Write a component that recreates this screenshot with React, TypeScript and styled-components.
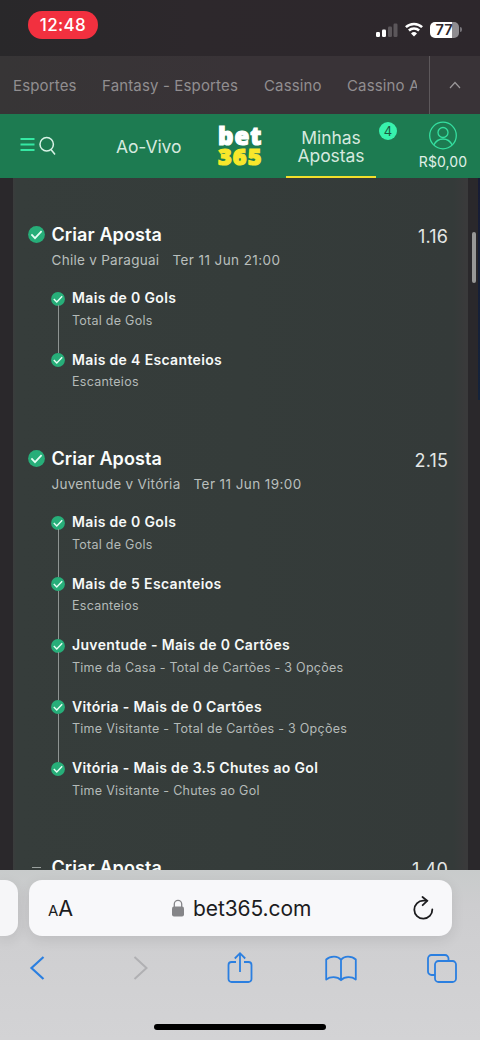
import React from "react";
import styled, { createGlobalStyle } from "styled-components";

const Global = createGlobalStyle`
  * { box-sizing: border-box; }
  body { margin: 0; background: #29272a; font-family: Inter, "Liberation Sans", sans-serif; }
`;

const Screen = styled.div`
  width: 480px;
  height: 1040px;
  display: flex;
  flex-direction: column;
  overflow: hidden;
`;

const StatusBar = styled.header`
  height: 56px;
  flex: none;
  display: flex;
  align-items: flex-start;
  justify-content: space-between;
  padding: 11px 18px 0 28px;
  background: linear-gradient(90deg, #29282a 0%, #2d282c 40%, #2d272c 100%);
`;

const Clock = styled.div`
  width: 70px;
  height: 28px;
  border-radius: 14px;
  background: #f2303f;
  color: #fff;
  font-size: 17px;
  font-weight: 500;
  line-height: 28px;
  text-align: center;
  letter-spacing: 0.35px;
`;

const StatusIcons = styled.div`
  display: flex;
  align-items: center;
  gap: 7px;
  padding-top: 10px;
  height: 27px;
`;

const Battery = styled.div`
  position: relative;
  width: 29px;
  height: 16px;
  border-radius: 5px;
  background: linear-gradient(90deg, #fff 76%, #8f8c90 76%);
  color: #2d272c;
  font-size: 14.5px;
  font-weight: 600;
  line-height: 16px;
  text-align: center;
  padding-right: 1px;
  margin-right: 3px;
  &::after {
    content: "";
    position: absolute;
    right: -3px;
    top: 5px;
    width: 2px;
    height: 5px;
    border-radius: 0 2px 2px 0;
    background: #77747a;
  }
`;

const ProductNav = styled.nav`
  height: 58px;
  flex: none;
  display: flex;
  background: linear-gradient(90deg, #373536 0%, #393337 50%, #393337 100%);
  color: #918e90;
`;

const ProductList = styled.div`
  flex: 1;
  min-width: 0;
  display: flex;
  align-items: center;
  gap: 26px;
  padding: 2px 0 0 13px;
  margin-right: 12px;
  overflow: hidden;
  white-space: nowrap;
`;

const Product = styled.span<{ $w: number }>`
  flex: none;
  width: ${(p) => p.$w}px;
  font-size: 15px;
  letter-spacing: 0.15px;
  line-height: 20px;
`;

const Collapse = styled.div`
  width: 51px;
  border-left: 1px solid #5d585b;
  display: flex;
  align-items: center;
  justify-content: center;
`;

const MainNav = styled.nav`
  height: 64px;
  flex: none;
  display: flex;
  background: #1d7b51;
  color: #d6e9df;
`;

const MenuTools = styled.div`
  width: 116px;
  display: flex;
  padding: 22px 0 0 20px;
`;

const NavItem = styled.div`
  width: 101px;
  font-size: 17.5px;
  line-height: 65px;
  letter-spacing: -0.1px;
`;

const Logo = styled.div`
  width: 69px;
  padding: 12px 0 0 1px;
  font-family: "Open Sans", "Noto Sans", sans-serif;
  font-weight: 800;
`;

const LogoLine = styled.div<{ $accent?: boolean }>`
  height: 20px;
  line-height: 20px;
  font-size: ${(p) => (p.$accent ? 23.5 : 24)}px;
  letter-spacing: ${(p) => (p.$accent ? 1.1 : 1)}px;
  color: ${(p) => (p.$accent ? "#f8e72b" : "#fff")};
  -webkit-text-stroke: 1.2px currentColor;
`;

const ActiveTab = styled.div`
  position: relative;
  width: 90px;
  padding-top: 15px;
  border-bottom: 2.5px solid #f1df2b;
  text-align: center;
  font-size: 17.5px;
  line-height: 18px;
  letter-spacing: -0.05px;
`;

const Badge = styled.span`
  position: absolute;
  left: 93px;
  top: 8px;
  width: 18px;
  height: 18px;
  border-radius: 50%;
  background: #38f3ad;
  color: #1c5940;
  font-size: 13px;
  line-height: 18px;
`;

const Account = styled.div`
  flex: 1;
  display: flex;
  flex-direction: column;
  align-items: center;
  padding: 7px 0 0 30px;
  font-size: 14px;
  line-height: 17px;
  letter-spacing: 0.1px;
  gap: 3px;
  color: #e0f0e8;
`;

const Page = styled.main`
  position: relative;
  flex: 1;
  min-height: 0;
  overflow: hidden;
  padding: 0 12px 0 13px;
  background: #2a282b;
`;

const ScrollThumb = styled.div`
  position: absolute;
  right: 4px;
  top: 54px;
  width: 4px;
  height: 51px;
  border-radius: 2px;
  background: #989897;
`;

const EdgeGlow = styled.div`
  position: absolute;
  right: 0;
  top: 0;
  width: 2px;
  height: 222px;
  background: linear-gradient(#171c35, #14233b);
`;

const Slip = styled.section`
  height: 100%;
  padding-top: 44px;
  background: linear-gradient(90deg, #3a3c3c 0, #363d3b 3px, #353c3a 50%, #343a39 440px, #3a3a3b 453px);
`;

const Bet = styled.article`
  display: grid;
  grid-template-columns: 24px 1fr auto;
  padding: 0 20px 0 15px;
`;

const BetTitle = styled.h2`
  margin: 0 0 0 -0.5px;
  font-size: 18px;
  font-weight: 600;
  line-height: 26px;
  letter-spacing: 0.1px;
  color: #fbfdfc;
`;

const BetStatus = styled.div`
  padding-top: 4px;
  height: 26px;
`;

const Odds = styled.div`
  padding-top: 2px;
  height: 26px;
  font-size: 18px;
  line-height: 26px;
  letter-spacing: 0.15px;
  color: #e4e7e6;
`;

const Fixture = styled.div`
  grid-column: 2 / 4;
  display: flex;
  gap: 13px;
  height: 23px;
  line-height: 25px;
  margin-left: -0.5px;
  font-size: 13.5px;
  letter-spacing: 0.28px;
  color: #b9bfbd;
`;

const Kickoff = styled.span`
  letter-spacing: 0.42px;
`;

const Legs = styled.ul`
  grid-column: 2 / 4;
  list-style: none;
  margin: 16px 0 36px;
  padding: 0;
`;

const Leg = styled.li`
  position: relative;
  display: grid;
  grid-template-columns: 21px 1fr;
  margin-left: -1px;
  height: 61.5px;
  &:not(:last-child)::before {
    content: "";
    position: absolute;
    left: 6.5px;
    top: 18px;
    width: 1px;
    height: 48px;
    background: #8e9492;
  }
`;

const LegMark = styled.div`
  padding-top: 4.5px;
  line-height: 0;
`;

const LegName = styled.div`
  font-size: 14px;
  font-weight: 600;
  line-height: 22.6px;
  letter-spacing: 0.34px;
  color: #f6f9f8;
  white-space: nowrap;
`;

const LegMarket = styled.div`
  font-size: 12.5px;
  line-height: 21px;
  letter-spacing: 0.26px;
  color: #b4bab8;
  white-space: nowrap;
`;

const Browser = styled.footer`
  height: 170px;
  flex: none;
  display: flex;
  flex-direction: column;
  background: linear-gradient(#c8cbcb 0, #cdcdcf 35px, #cfcfd1 70px, #d3d3d5 100%);
`;

const AddressRow = styled.div`
  display: flex;
  gap: 11px;
  padding-top: 10px;
  height: 66px;
`;

const NextTab = styled.div`
  width: 18px;
  height: 56px;
  border-radius: 0 13px 13px 0;
  background: #f6f6f8;
  box-shadow: 0 4px 14px rgba(0, 0, 0, 0.09);
`;

const Address = styled.div`
  width: 423px;
  height: 56px;
  display: flex;
  align-items: center;
  border-radius: 13px;
  background: #f8f8fa;
  box-shadow: 0 4px 14px rgba(0, 0, 0, 0.09);
  color: #1c1c1e;
  padding: 0 18px 0 19px;
`;

const TextSize = styled.div`
  width: 123px;
  font-size: 21.5px;
  line-height: 56px;
  padding-top: 2px;
  small { font-size: 15px; }
`;

const Url = styled.div`
  flex: 1;
  padding: 2px 0 0 8px;
  font-size: 21px;
  line-height: 56px;
  letter-spacing: -0.1px;
`;

const Toolbar = styled.div`
  display: grid;
  grid-template-columns: repeat(5, 40px);
  column-gap: 61px;
  justify-items: center;
  align-items: center;
  height: 64px;
  padding-left: 18px;
`;

const HomeIndicator = styled.div`
  width: 172px;
  height: 6px;
  margin: 24px 0 0 154px;
  border-radius: 3px;
  background: #000;
`;

const Check = ({ size }: { size: number }) => (
  <svg width={size} height={size} viewBox="0 0 17 17">
    <circle cx="8.5" cy="8.5" r="8.4" fill="#27ae79" />
    <path d="M3.4 8.4 7 12.2l6.600-7" fill="none" stroke="#e6fff5" strokeWidth="1.7" />
  </svg>
);

type LegData = [name: string, market: string];
type BetData = { won: boolean; fixture: string; time: string; odds: string; legs: LegData[] };

const bets: BetData[] = [
  {
    won: true,
    fixture: "Chile v Paraguai",
    time: "Ter 11 Jun 21:00",
    odds: "1.16",
    legs: [
      ["Mais de 0 Gols", "Total de Gols"],
      ["Mais de 4 Escanteios", "Escanteios"],
    ],
  },
  {
    won: true,
    fixture: "Juventude v Vitória",
    time: "Ter 11 Jun 19:00",
    odds: "2.15",
    legs: [
      ["Mais de 0 Gols", "Total de Gols"],
      ["Mais de 5 Escanteios", "Escanteios"],
      ["Juventude - Mais de 0 Cartões", "Time da Casa - Total de Cartões - 3 Opções"],
      ["Vitória - Mais de 0 Cartões", "Time Visitante - Total de Cartões - 3 Opções"],
      ["Vitória - Mais de 3.5 Chutes ao Gol", "Time Visitante - Chutes ao Gol"],
    ],
  },
  { won: false, fixture: "", time: "", odds: "1.40", legs: [] },
];

export default function App() {
  return (
    <Screen>
      <Global />
      <StatusBar>
        <Clock>12:48</Clock>
        <StatusIcons>
          <svg width="23" height="16" viewBox="0 0 23 16">
            <rect x="1" y="10" width="4" height="5" rx="1.2" fill="#fff" />
            <rect x="7" y="7.5" width="4" height="7.5" rx="1.2" fill="#fff" />
            <rect x="13" y="4.5" width="4" height="10.5" rx="1.2" fill="#5b565a" />
            <rect x="18.500" y="1.5" width="4" height="13.5" rx="1.2" fill="#5b565a" />
          </svg>
          <svg width="18" height="15" viewBox="0 0 18 15" fill="none" stroke="#fff" strokeWidth="2.5">
            <path d="M.9 5.2a11.6 11.6 0 0 1 16.2 0" />
            <path d="M3.9 8.5a7.3 7.3 0 0 1 10.2 0" />
            <path d="M9 14.5 6 11.4a4.3 4.3 0 0 1 6 0z" fill="#fff" stroke="none" />
          </svg>
          <Battery>77</Battery>
        </StatusIcons>
      </StatusBar>

      <ProductNav>
        <ProductList>
          <Product $w={63}>Esportes</Product>
          <Product $w={136}>Fantasy - Esportes</Product>
          <Product $w={57}>Cassino</Product>
          <Product $w={110}>Cassino Ao-Vivo</Product>
        </ProductList>
        <Collapse>
          <svg width="12" height="8" viewBox="0 0 12 8" fill="none" stroke="#9b989a" strokeWidth="1.2">
            <path d="m1 7 5-5.5L11 7" />
          </svg>
        </Collapse>
      </ProductNav>

      <MainNav>
        <MenuTools>
          <svg width="37" height="20" viewBox="0 0 37 20" fill="none">
            <path d="M.5 3h14M.5 8.5h14M.5 14h14" stroke="#35e8a3" strokeWidth="1.9" />
            <circle cx="26.7" cy="8.3" r="6.7" stroke="#d8f3e6" strokeWidth="1.5" />
            <path d="m31 13.5 4 5" stroke="#d8f3e6" strokeWidth="1.5" />
          </svg>
        </MenuTools>
        <NavItem>Ao-Vivo</NavItem>
        <Logo>
          <LogoLine>bet</LogoLine>
          <LogoLine $accent>365</LogoLine>
        </Logo>
        <ActiveTab>
          Minhas
          <br />
          Apostas
          <Badge>4</Badge>
        </ActiveTab>
        <Account>
          <svg width="28" height="29" viewBox="0 0 28 29" fill="none" stroke="#35dfa0" strokeWidth="1.3">
            <circle cx="14" cy="14.5" r="13.3" />
            <circle cx="14" cy="11.5" r="5" />
            <path d="M4.8 24c2-4 5.5-6 9.2-6s7.2 2 9.2 6" />
          </svg>
          R$0,00
        </Account>
      </MainNav>

      <Page>
        <Slip>
          {bets.map((bet) => (
            <Bet key={bet.odds}>
              <BetStatus>
                {bet.won ? (
                  <Check size={17} />
                ) : (
                  <svg width="17" height="17">
                    <path d="M4 8.500h9" stroke="#9aa09e" strokeWidth="1" />
                  </svg>
                )}
              </BetStatus>
              <BetTitle>Criar Aposta</BetTitle>
              <Odds>{bet.odds}</Odds>
              <Fixture>
                <span>{bet.fixture}</span>
                <Kickoff>{bet.time}</Kickoff>
              </Fixture>
              <Legs>
                {bet.legs.map(([name, market]) => (
                  <Leg key={name}>
                    <LegMark>
                      <Check size={14} />
                    </LegMark>
                    <div>
                      <LegName>{name}</LegName>
                      <LegMarket>{market}</LegMarket>
                    </div>
                  </Leg>
                ))}
              </Legs>
            </Bet>
          ))}
        </Slip>
        <ScrollThumb />
        <EdgeGlow />
      </Page>

      <Browser>
        <AddressRow>
          <NextTab />
          <Address>
            <TextSize>
              <small>A</small>A
            </TextSize>
            <svg width="14" height="18" viewBox="0 0 14 18">
              <rect x="1" y="7.5" width="12" height="10" rx="2" fill="#858588" />
              <path d="M3.3 8V5a3.7 3.7 0 0 1 7.4 0v3" fill="none" stroke="#858588" strokeWidth="1.3" />
            </svg>
            <Url>bet365.com</Url>
            <svg width="21" height="25" viewBox="0 0 21 25" fill="none" stroke="#1c1c1e" strokeWidth="1.8" strokeLinecap="round">
              <path d="M19.3 13.5a9 9 0 1 1-9-8.8h3.5" />
              <path d="m9.5 1 4.7 3.9-4.5 4.3" />
            </svg>
          </Address>
        </AddressRow>
        <Toolbar>
          <svg width="20" height="34" viewBox="0 0 20 34" fill="none" stroke="#2b7fe0" strokeWidth="2.2">
            <path d="M15.5 6 3.5 17l12 11" />
          </svg>
          <svg width="20" height="34" viewBox="0 0 20 34" fill="none" stroke="#b0b0b3" strokeWidth="2">
            <path d="m5.5 6 12 11-12 11" />
          </svg>
          <svg width="26" height="34" viewBox="0 0 26 34" fill="none" stroke="#2b7fe0" strokeWidth="1.8">
            <path d="M9 11H4.500A3 3 0 0 0 1.500 14v14a3 3 0 0 0 3 3h17a3 3 0 0 0 3-3V14a3 3 0 0 0-3-3H17M13 21V2.500M7.800 7.500 13 2.200 18.200 7.500" />
          </svg>
          <svg width="32" height="34" viewBox="0 0 32 34" fill="none" stroke="#2b7fe0" strokeWidth="1.8" strokeLinejoin="round">
            <path d="M16 9C14.500 6.800 12 5.700 9 5.700S3 6.800 1.200 8.500V28.500c2-1.500 4.500-2.300 7.300-2.300s5.500.9 7.500 3c2-2.100 4.700-3 7.500-3s5.300.8 7.300 2.300V8.500C29 6.800 26 5.700 23 5.700S17.500 6.800 16 9zv20" />
          </svg>
          <svg width="30" height="34" viewBox="0 0 30 34" fill="none" stroke="#2b7fe0" strokeWidth="1.8">
            <path d="M8 24H4.500a3.500 3.500 0 0 1-3.500-3.500v-13A3.500 3.500 0 0 1 4.500 4H18a3.500 3.500 0 0 1 3.500 3.500V10" />
            <rect x="8" y="10" width="21" height="21" rx="3.500" />
          </svg>
        </Toolbar>
        <HomeIndicator />
      </Browser>
    </Screen>
  );
}
